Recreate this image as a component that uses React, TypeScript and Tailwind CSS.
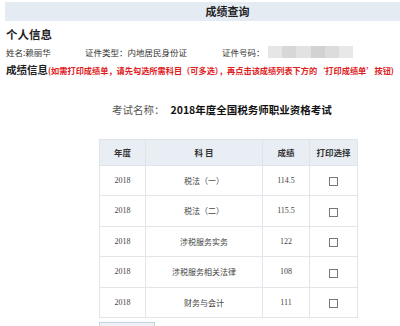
import React from "react";

const rows = [
  { year: "2018", subject: "税法（一）", score: "114.5" },
  { year: "2018", subject: "税法（二）", score: "115.5" },
  { year: "2018", subject: "涉税服务实务", score: "122" },
  { year: "2018", subject: "涉税服务相关法律", score: "108" },
  { year: "2018", subject: "财务与会计", score: "111" },
];

const App = () => {
  return (
    <div
      className="w-[400px] h-[326px] overflow-hidden bg-white text-[#222]"
      style={{ fontFamily: '"Noto Sans CJK SC", "Noto Sans", sans-serif' }}
    >
      <div className="ml-[5px] mt-[2px] h-[19px] bg-[#e4ebf3] flex items-center justify-center pl-[50px]">
        <span className="text-[11px] font-bold leading-none">成绩查询</span>
      </div>

      <div className="px-[6px]">
        <h2 className="mt-[6px] text-[11.5px] font-bold leading-[14px]">个人信息</h2>

        <div className="mt-[5px] flex items-center text-[8.5px] text-[#333] leading-[12px]">
          <span className="w-[79px]">姓名:赖丽华</span>
          <span className="w-[137px]">证件类型：内地居民身份证</span>
          <span>证件号码：</span>
          <div className="ml-[3px] h-[12px] w-[86px] flex">
            <div className="flex-1 bg-[#e6e6e6]" />
            <div className="flex-1 bg-[#d7d7d7]" />
            <div className="flex-1 bg-[#e2e2e2]" />
            <div className="flex-1 bg-[#d2d2d2]" />
            <div className="flex-1 bg-[#dcdcdc]" />
            <div className="flex-1 bg-[#e8e8e8]" />
          </div>
        </div>

        <div className="mt-[4px] flex items-baseline whitespace-nowrap">
          <span className="text-[10.5px] font-bold">成绩信息</span>
          <span className="text-[8.2px] font-bold text-[#e0201c]">
            (如需打印成绩单，请先勾选所需科目（可多选），再点击该成绩列表下方的‘打印成绩单’按钮)
          </span>
        </div>
      </div>

      <div className="mt-[25px] ml-[112px] flex items-center leading-[14px]">
        <span className="text-[10.5px] text-[#555]">考试名称：</span>
        <span className="ml-[6px] text-[10.5px] font-bold text-[#111]">2018年度全国税务师职业资格考试</span>
      </div>

      <table className="mt-[22px] ml-[99px] w-[258px] border-collapse text-center table-fixed">
        <colgroup>
          <col className="w-[46px]" />
          <col className="w-[117px]" />
          <col className="w-[47px]" />
          <col className="w-[48px]" />
        </colgroup>
        <thead>
          <tr className="h-[26px] bg-[#e8eef4] text-[8.5px] font-bold text-[#333]">
            <th className="border border-[#dfe4e9]">年度</th>
            <th className="border border-[#dfe4e9]">科 目</th>
            <th className="border border-[#dfe4e9]">成绩</th>
            <th className="border border-[#dfe4e9]">打印选择</th>
          </tr>
        </thead>
        <tbody>
          {rows.map((r) => (
            <tr key={r.subject} className="h-[30.5px] text-[8px] text-[#444]">
              <td className="border border-[#e2e6ea]" style={{ fontFamily: '"Liberation Serif", serif' }}>{r.year}</td>
              <td className="border border-[#e2e6ea]">{r.subject}</td>
              <td className="border border-[#e2e6ea]" style={{ fontFamily: '"Liberation Serif", serif' }}>{r.score}</td>
              <td className="border border-[#e2e6ea]">
                <div className="mx-auto mt-[2px] w-[9px] h-[9px] border border-[#777] bg-white" />
              </td>
            </tr>
          ))}
        </tbody>
      </table>

      <div className="mt-[4px] ml-[99px] w-[56px] h-[6px] border-t border-x border-[#c9d3dd] bg-[#eef2f6]" />
    </div>
  );
};

export default App;
